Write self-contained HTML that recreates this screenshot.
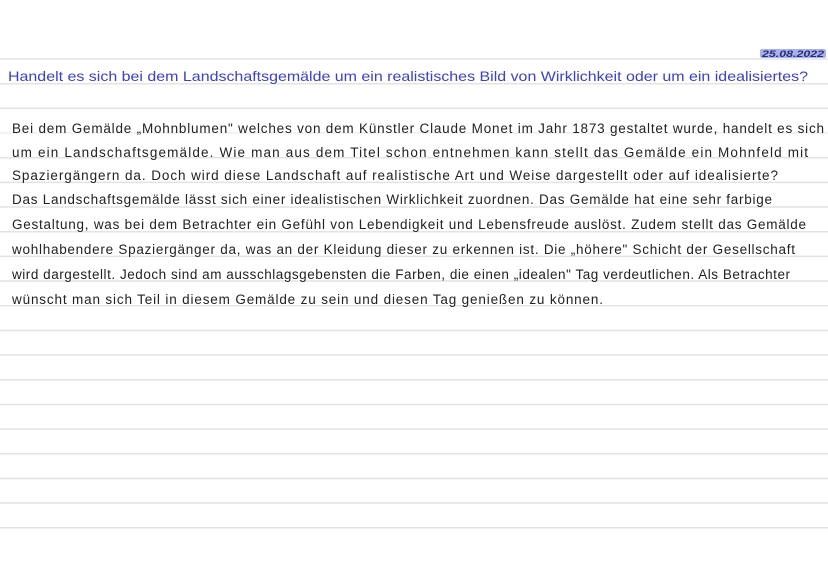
<!DOCTYPE html>
<html><head><meta charset="utf-8"><style>
html,body{margin:0;padding:0;background:#fff;}
svg{display:block}
</style></head><body>
<svg width="828" height="584" xmlns="http://www.w3.org/2000/svg">
<g stroke="#e3e3e3" stroke-width="1.5">
<line x1="0" x2="828" y1="59" y2="59"/><line x1="0" x2="828" y1="83.7" y2="83.7"/>
<line x1="0" x2="828" y1="108.4" y2="108.4"/><line x1="0" x2="828" y1="133" y2="133" stroke="#efefef"/>
<line x1="0" x2="828" y1="157.7" y2="157.7"/><line x1="0" x2="828" y1="182.4" y2="182.4"/>
<line x1="0" x2="828" y1="207" y2="207"/><line x1="0" x2="828" y1="231.8" y2="231.8"/>
<line x1="0" x2="828" y1="256.4" y2="256.4"/><line x1="0" x2="828" y1="281" y2="281"/>
<line x1="0" x2="828" y1="305.8" y2="305.8"/><line x1="0" x2="828" y1="330.5" y2="330.5"/>
<line x1="0" x2="828" y1="355" y2="355"/><line x1="0" x2="828" y1="379.8" y2="379.8"/>
<line x1="0" x2="828" y1="404.5" y2="404.5"/><line x1="0" x2="828" y1="429" y2="429"/>
<line x1="0" x2="828" y1="453.8" y2="453.8"/><line x1="0" x2="828" y1="478.5" y2="478.5"/>
<line x1="0" x2="828" y1="503" y2="503"/><line x1="0" x2="828" y1="527.8" y2="527.8"/>
</g>
<rect x="760" y="49" width="66" height="9" rx="2" fill="#a9b0f2"/>
<text x="762" y="57" font-family="Liberation Sans, sans-serif" font-size="9" font-style="italic" font-weight="bold" fill="#2a2f6a" textLength="62" lengthAdjust="spacingAndGlyphs">25.08.2022</text>
<text x="8" y="81" font-family="Liberation Sans, sans-serif" font-size="14" fill="#3b40cf" textLength="800" lengthAdjust="spacingAndGlyphs">Handelt es sich bei dem Landschaftsgemälde um ein realistisches Bild von Wirklichkeit oder um ein idealisiertes?</text>
<g font-family="Liberation Sans, sans-serif" font-size="13.5" fill="#222" lengthAdjust="spacingAndGlyphs">
<text x="12" y="133" textLength="812">Bei dem Gemälde „Mohnblumen" welches von dem Künstler Claude Monet im Jahr 1873 gestaltet wurde, handelt es sich</text>
<text x="12" y="157" textLength="796">um ein Landschaftsgemälde. Wie man aus dem Titel schon entnehmen kann stellt das Gemälde ein Mohnfeld mit</text>
<text x="12" y="180" textLength="766">Spaziergängern da. Doch wird diese Landschaft auf realistische Art und Weise dargestellt oder auf idealisierte?</text>
<text x="12" y="204" textLength="760">Das Landschaftsgemälde lässt sich einer idealistischen Wirklichkeit zuordnen. Das Gemälde hat eine sehr farbige</text>
<text x="12" y="229" textLength="794">Gestaltung, was bei dem Betrachter ein Gefühl von Lebendigkeit und Lebensfreude auslöst. Zudem stellt das Gemälde</text>
<text x="12" y="254" textLength="783">wohlhabendere Spaziergänger da, was an der Kleidung dieser zu erkennen ist. Die „höhere" Schicht der Gesellschaft</text>
<text x="12" y="279" textLength="778">wird dargestellt. Jedoch sind am ausschlagsgebensten die Farben, die einen „idealen" Tag verdeutlichen. Als Betrachter</text>
<text x="12" y="304" textLength="591">wünscht man sich Teil in diesem Gemälde zu sein und diesen Tag genießen zu können.</text>
</g>
</svg>
</body></html>
